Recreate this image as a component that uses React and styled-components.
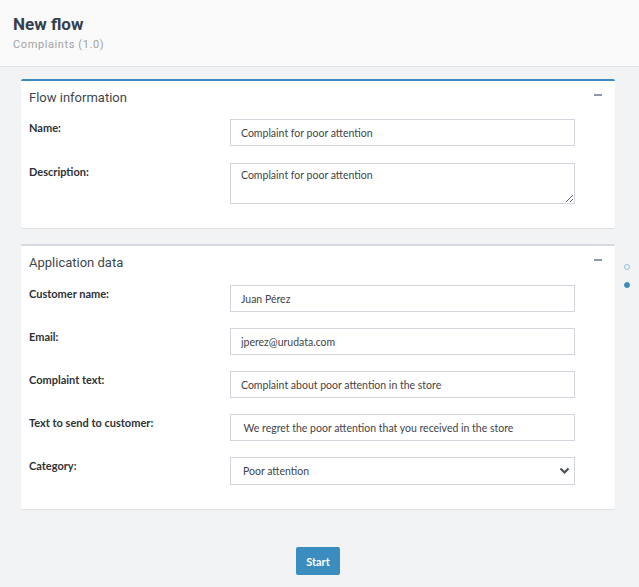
import React from "react";
import styled, { createGlobalStyle } from "styled-components";

const Global = createGlobalStyle`
  html, body { margin: 0; padding: 0; background: #f2f3f5; }
  body { font-family: Lato, "Liberation Sans", sans-serif; }
  * { box-sizing: border-box; }
`;

const Page = styled.div`
  position: relative;
  min-height: 587px;
  background: #f2f3f5;
`;

const Header = styled.header`
  height: 67px;
  background: #fafafa;
  border-bottom: 1px solid #e2e4e7;
  padding: 13px 13px 0;
`;

const Title = styled.h1`
  margin: 0;
  font-family: Roboto, "Liberation Sans", sans-serif;
  font-weight: 700;
  font-size: 17px;
  line-height: 22px;
  color: #34404c;
`;

const Subtitle = styled.div`
  margin-top: 4px;
  font-family: Roboto, "Liberation Sans", sans-serif;
  font-size: 11px;
  line-height: 12px;
  letter-spacing: 0.6px;
  color: #9fa3a7;
`;

const Main = styled.main`
  padding: 12px 24px 0 21px;
  display: flex;
  flex-direction: column;
  gap: 16px;
`;

const Card = styled.section`
  background: #fff;
  border-top: 2px solid ${(p) => (p.$active ? "#3a8bbf" : "#d6dae0")};
  border-radius: 2px;
  box-shadow: 0 1px 1px rgba(0, 0, 0, 0.08);
  padding: 0 0 24px;
`;

const CardHead = styled.div`
  display: flex;
  align-items: center;
  justify-content: space-between;
  padding: 8px 13px 8px 8px;
  height: 32px;
`;

const CardTitle = styled.h2`
  margin: 0;
  font-family: Roboto, "Liberation Sans", sans-serif;
  font-weight: 400;
  font-size: 13px;
  color: #41474d;
`;

const Minus = styled.span`
  display: block;
  width: 8px;
  height: 2px;
  background: #8d9aae;
  margin-top: -4px;
`;

const Fields = styled.div`
  display: flex;
  flex-direction: column;
  gap: ${(p) => p.$gap}px;
  padding: ${(p) => p.$top}px 0 0 8px;
`;

const Row = styled.div`
  display: grid;
  grid-template-columns: 201px 345px;
  align-items: start;
`;

const Label = styled.label`
  font-size: 11px;
  font-weight: 700;
  color: #2e3338;
  padding-top: 2px;
`;

const Input = styled.input`
  width: 345px;
  height: 27px;
  border: 1px solid #d2d6dc;
  border-radius: 0;
  padding: 0 10px;
  font-family: Lato, "Liberation Sans", sans-serif;
  font-size: 10.5px;
  color: #3f4448;
  background: #fff;
  outline: none;
`;

const TextArea = styled.textarea`
  width: 345px;
  height: 41px;
  border: 1px solid #d2d6dc;
  padding: 5px 10px;
  font-family: Lato, "Liberation Sans", sans-serif;
  font-size: 10.5px;
  color: #3f4448;
  resize: vertical;
  outline: none;
  display: block;
`;

const SelectWrap = styled.div`
  position: relative;
  width: 345px;
  height: 28px;
`;

const Select = styled.select`
  appearance: none;
  width: 100%;
  height: 100%;
  border: 1px solid #d2d6dc;
  background: #fff;
  padding: 0 12px;
  font-family: Lato, "Liberation Sans", sans-serif;
  font-size: 10.5px;
  color: #3f4448;
  outline: none;
`;

const Chevron = styled.svg`
  position: absolute;
  right: 5px;
  top: 10px;
  pointer-events: none;
`;

const Actions = styled.div`
  display: flex;
  justify-content: center;
  padding-top: 22px;
  padding-bottom: 12px;
`;

const Button = styled.button`
  width: 44px;
  height: 28px;
  border: none;
  border-radius: 2px;
  background: #3b8dbf;
  color: #fff;
  font-family: Lato, "Liberation Sans", sans-serif;
  font-weight: 700;
  font-size: 11px;
  cursor: pointer;
`;

const Dots = styled.nav`
  position: absolute;
  left: 624px;
  top: 264px;
  display: flex;
  flex-direction: column;
  gap: 12px;
`;

const Dot = styled.span`
  display: block;
  width: 6px;
  height: 6px;
  border-radius: 50%;
  border: 1.5px solid ${(p) => (p.$filled ? "#3a8bbf" : "#8fc0e0")};
  background: ${(p) => (p.$filled ? "#3a8bbf" : "transparent")};
`;

function Field({ label, children }) {
  return (
    <Row>
      <Label>{label}</Label>
      {children}
    </Row>
  );
}

export default function App() {
  return (
    <Page>
      <Global />
      <Header>
        <Title>New flow</Title>
        <Subtitle>Complaints (1.0)</Subtitle>
      </Header>
      <Main>
        <Card $active>
          <CardHead>
            <CardTitle>Flow information</CardTitle>
            <Minus />
          </CardHead>
          <Fields $gap={17} $top={6}>
            <Field label="Name:">
              <Input defaultValue="Complaint for poor attention" />
            </Field>
            <Field label="Description:">
              <TextArea defaultValue="Complaint for poor attention" />
            </Field>
          </Fields>
        </Card>
        <Card>
          <CardHead>
            <CardTitle>Application data</CardTitle>
            <Minus />
          </CardHead>
          <Fields $gap={16} $top={7}>
            <Field label="Customer name:">
              <Input defaultValue="Juan Pérez" />
            </Field>
            <Field label="Email:">
              <Input defaultValue="jperez@urudata.com" />
            </Field>
            <Field label="Complaint text:">
              <Input defaultValue="Complaint about poor attention in the store" />
            </Field>
            <Field label="Text to send to customer:">
              <Input defaultValue=" We regret the poor attention that you received in the store" />
            </Field>
            <Field label="Category:">
              <SelectWrap>
                <Select defaultValue="poor">
                  <option value="poor">Poor attention</option>
                </Select>
                <Chevron width="11" height="8" viewBox="0 0 11 8">
                  <path d="M1.5 1.5 L5.5 5.5 L9.5 1.5" fill="none" stroke="#4a4f55" strokeWidth="2.2" />
                </Chevron>
              </SelectWrap>
            </Field>
          </Fields>
        </Card>
        <Actions>
          <Button>Start</Button>
        </Actions>
      </Main>
      <Dots>
        <Dot />
        <Dot $filled />
      </Dots>
    </Page>
  );
}
